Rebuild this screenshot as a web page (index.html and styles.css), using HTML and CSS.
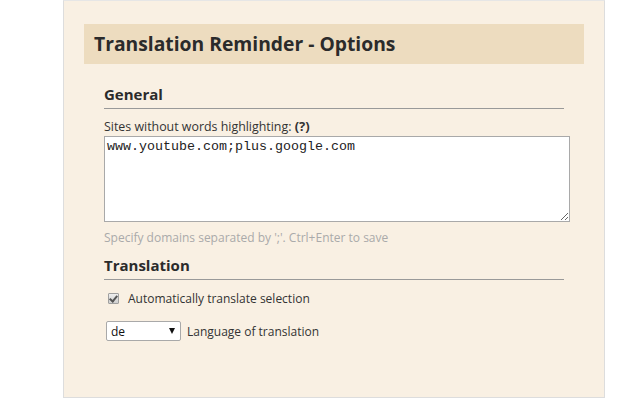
FILE: index.html
```html
<!DOCTYPE html>
<html>
<head>
<meta charset="utf-8">
<link rel="stylesheet" href="styles.css">
</head>
<body>
<div class="panel">
  <div class="header"><h1 class="title">Translation Reminder - Options</h1></div>
  <div class="content">
    <h2 class="section-title">General</h2>
    <div class="label">Sites without words highlighting: <b>(?)</b></div>
    <textarea class="sites">www.youtube.com;plus.google.com</textarea>
    <div class="hint">Specify domains separated by ';'. Ctrl+Enter to save</div>
    <h2 class="section-title second">Translation</h2>
    <label class="check-row"><input class="check" type="checkbox" checked> Automatically translate selection</label>
    <div class="select-row">
      <span class="select-wrap"><select class="lang"><option>de</option></select></span>
      <span>Language of translation</span>
    </div>
  </div>
</div>
</body>
</html>
```
FILE: styles.css
```css
html, body {
  margin: 0;
  padding: 0;
  background: #ffffff;
}
body {
  font-family: "Open Sans", "DejaVu Sans", sans-serif;
  font-size: 12px;
  color: #333333;
}
.panel {
  margin-left: 63px;
  width: 542px;
  height: 398px;
  background: #f9f0e3;
  border: 1px solid #dddddd;
  border-top-color: #e6e6e6;
  box-sizing: border-box;
  padding: 23px 20px 0 20px;
}
.header {
  background: #eddcbf;
  height: 40px;
  display: flex;
  align-items: center;
  padding-left: 10px;
}
.title {
  margin: 0;
  font-size: 19.3px;
  line-height: 26px;
  font-weight: bold;
  color: #2b2b2b;
}
.content {
  padding: 0 0 0 20px;
  width: 460px;
}
.section-title {
  margin: 20px 0 0 0;
  font-size: 15px;
  font-weight: bold;
  color: #2b2b2b;
  padding-bottom: 4px;
  border-bottom: 1px solid #999999;
}
.section-title.second {
  margin-top: 9px;
}
.label {
  margin-top: 9px;
  line-height: 16px;
  font-size: 12.4px;
}
.label b {
  font-size: 13px;
}
.sites {
  display: block;
  width: 466px;
  height: 86px;
  box-sizing: border-box;
  margin: 1px 0 0 0;
  border: 1px solid #a9a9a9;
  font-family: "Liberation Mono", monospace;
  font-size: 13.333px;
  color: #222222;
  padding: 2px;
  resize: both;
}
.hint {
  color: #aaaaaa;
  margin-top: 7px;
}
.check-row {
  display: flex;
  align-items: center;
  margin-top: 10px;
}
.check {
  appearance: none;
  -webkit-appearance: none;
  position: relative;
  width: 11px;
  height: 11px;
  margin: 0 9px 0 4px;
  border: 1px solid #a0a0a0;
  border-radius: 1px;
  background: linear-gradient(#eeeeee, #d0d0d0);
  box-sizing: border-box;
}
.check::after {
  content: "";
  position: absolute;
  left: 2px;
  top: 0px;
  width: 3px;
  height: 6px;
  border: solid #555555;
  border-width: 0 2px 2px 0;
  transform: rotate(40deg);
}
.select-row {
  display: flex;
  align-items: center;
  margin-top: 14px;
  padding-left: 2px;
}
.select-wrap {
  position: relative;
  display: inline-block;
  margin-right: 6px;
}
.select-wrap::after {
  content: "";
  position: absolute;
  right: 6px;
  top: 7px;
  border-left: 3.5px solid transparent;
  border-right: 3.5px solid transparent;
  border-top: 6px solid #111111;
  pointer-events: none;
}
.lang {
  appearance: none;
  -webkit-appearance: none;
  display: block;
  width: 75px;
  height: 20px;
  font-family: "Open Sans", "DejaVu Sans", sans-serif;
  font-size: 12px;
  color: #111111;
  background: #ffffff;
  border: 1px solid #a9a9a9;
  border-radius: 2px;
  padding: 0 0 0 4px;
  margin: 0;
}
```
